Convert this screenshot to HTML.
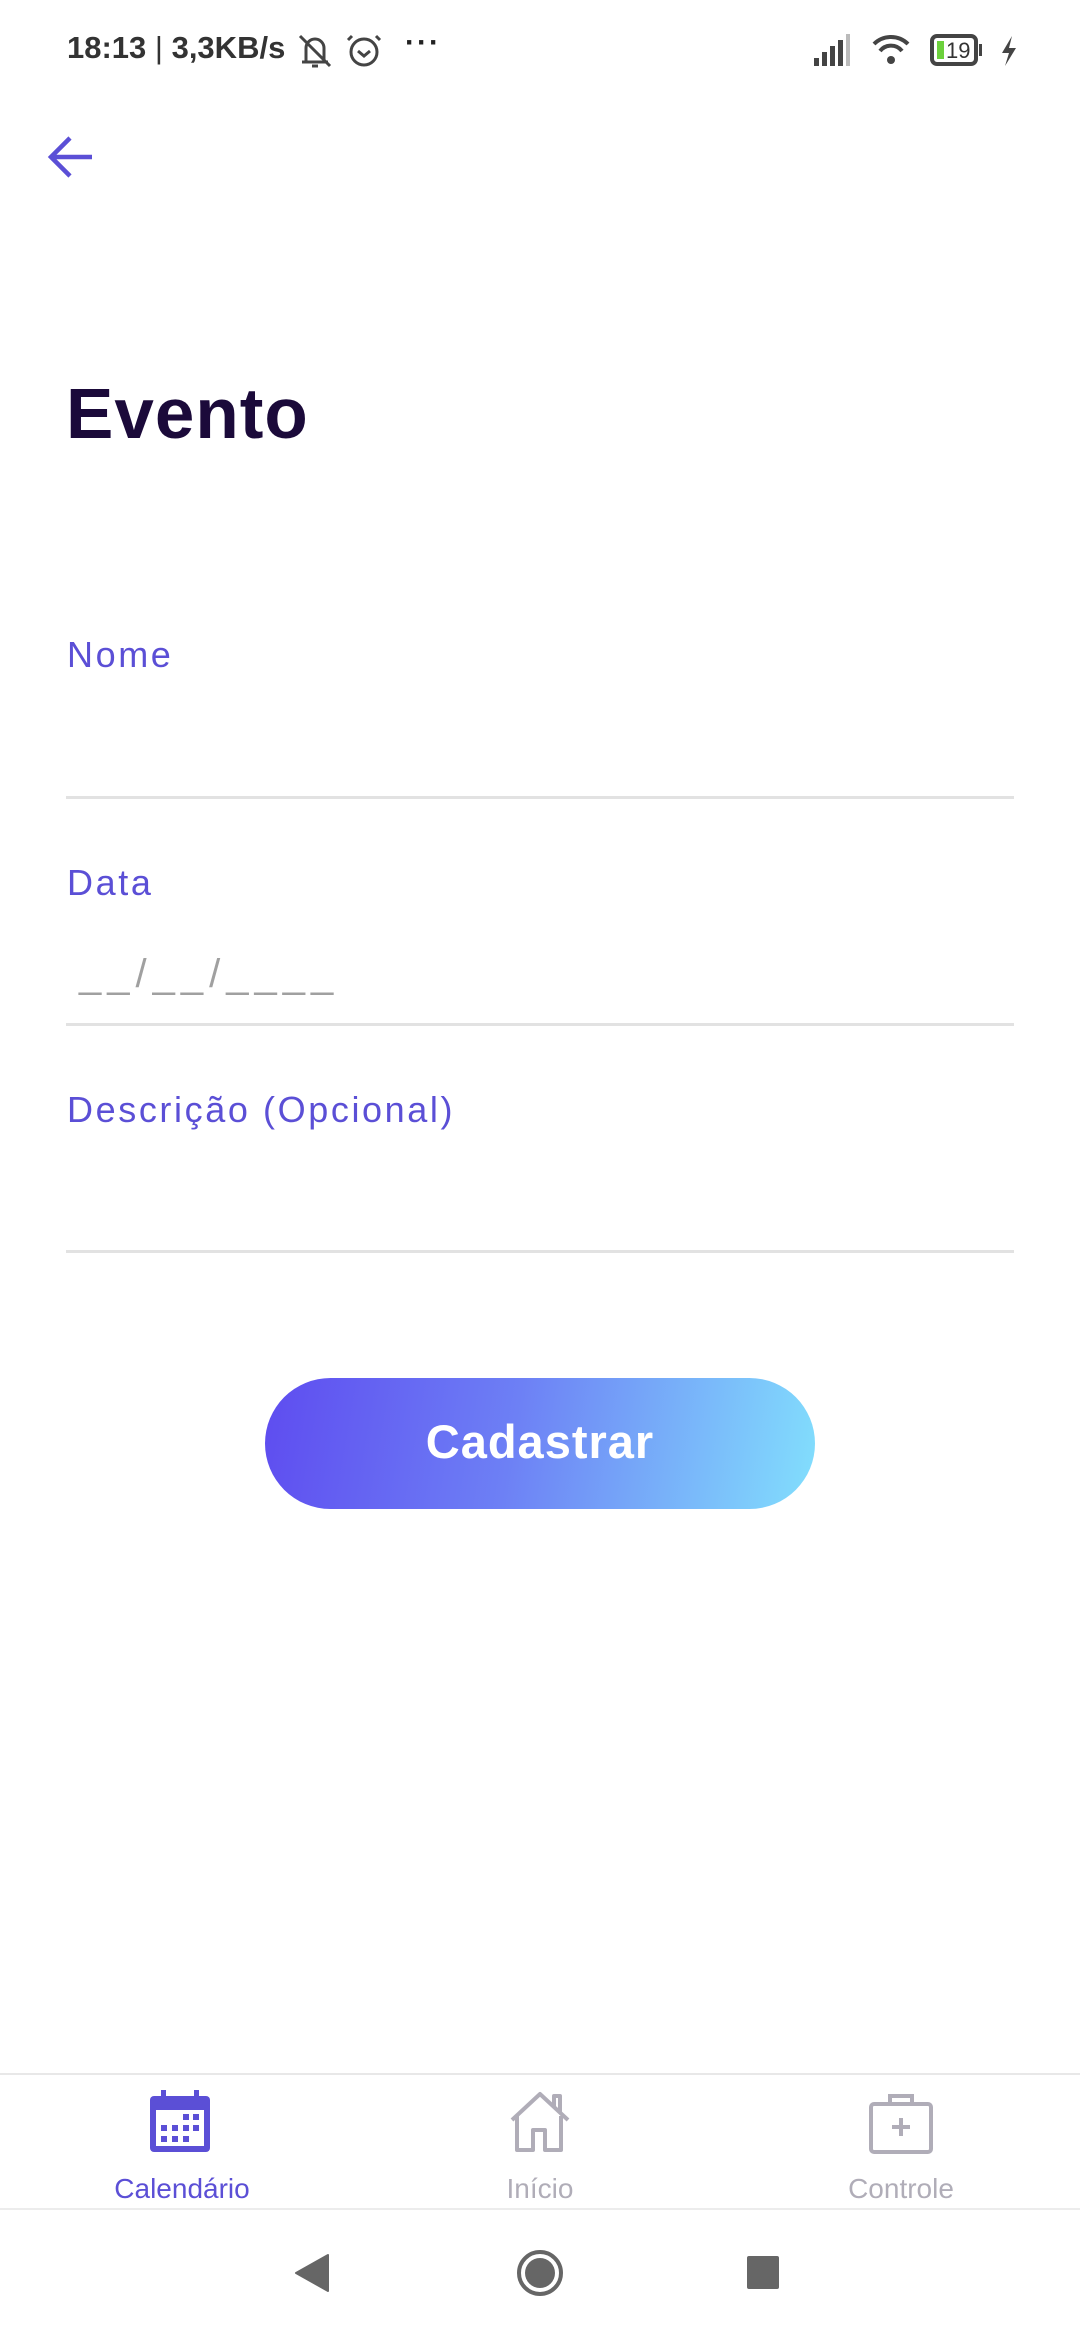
<!DOCTYPE html>
<html><head><meta charset="utf-8"><style>
*{margin:0;padding:0;box-sizing:border-box}
body{width:1080px;height:2340px;background:#fff;position:relative;overflow:hidden;font-family:"Liberation Sans",sans-serif}
.abs{position:absolute}
.lbl{position:absolute;left:67px;color:#5b4fd6;font-size:36px;letter-spacing:2.6px;font-weight:500}
.line{position:absolute;left:66px;width:948px;height:3px;background:#e2e2e2}
.nav{position:absolute;font-size:28px;text-align:center;width:240px}
</style></head><body>
<div class="abs" style="left:67px;top:30px;font-size:31px;font-weight:bold;color:#333">18:13 <span style="font-weight:normal">|</span> 3,3KB/s</div>
<svg class="abs" style="left:296px;top:30px" width="110" height="42" viewBox="0 0 110 42">
<g fill="none" stroke="#444" stroke-width="3"><path d="M6 32h26M10 32V18a9 9 0 0 1 18 0v14M16 36h6M4 6l30 30"/>
<circle cx="68" cy="22" r="13"/><path d="M62 21l6 5 6-5M56 6l-4 4M80 6l4 4"/></g></svg>
<div class="abs" style="left:405px;top:26px;font-size:30px;font-weight:bold;color:#222;letter-spacing:2px">···</div>
<svg class="abs" style="left:812px;top:30px" width="220" height="42" viewBox="0 0 220 42">
<g fill="#444"><rect x="2" y="28" width="5" height="8"/><rect x="10" y="22" width="5" height="14"/><rect x="18" y="16" width="5" height="20"/><rect x="26" y="10" width="5" height="26"/><rect x="34" y="4" width="4" height="32" fill="#bbb"/></g>
<g fill="none" stroke="#444" stroke-width="4"><path d="M62 14a24 24 0 0 1 34 0M68 21a14 14 0 0 1 22 0"/></g><circle cx="79" cy="30" r="4" fill="#444"/>
<rect x="120" y="6" width="44" height="28" rx="5" fill="none" stroke="#444" stroke-width="4"/><rect x="125" y="11" width="7" height="18" fill="#6cd13c"/>
<text x="134" y="28" font-size="22" fill="#333" font-family="Liberation Sans">19</text><rect x="167" y="14" width="3" height="12" fill="#444"/>
<path d="M200 6l-10 17h7l-4 13 11-18h-7z" fill="#444"/></svg>
<svg class="abs" style="left:46px;top:134px" width="50" height="46" viewBox="0 0 50 46"><path d="M46 23H6M24 4L5 23l19 19" fill="none" stroke="#5b4fd6" stroke-width="4.5"/></svg>
<div class="abs" style="left:66px;top:374px;font-size:71px;font-weight:bold;color:#1b0a3a;letter-spacing:1px">Evento</div>
<div class="lbl" style="top:634px">Nome</div>
<div class="line" style="top:796px"></div>
<div class="lbl" style="top:862px">Data</div>
<div class="abs" style="left:79px;top:952px;font-size:40px;color:#a0a0a0;letter-spacing:6px">__/__/____</div>
<div class="line" style="top:1023px"></div>
<div class="lbl" style="top:1089px">Descrição (Opcional)</div>
<div class="line" style="top:1250px"></div>
<div class="abs" style="left:265px;top:1378px;width:550px;height:131px;border-radius:66px;background:linear-gradient(100deg,#5e4cf0 0%,#6d80f5 45%,#82dffd 100%);color:#fff;font-size:47px;font-weight:bold;text-align:center;line-height:127px;letter-spacing:1px">Cadastrar</div>
<div class="abs" style="left:0;top:2073px;width:1080px;height:2px;background:#e8e8e8"></div>
<svg class="abs" style="left:150px;top:2090px" width="60" height="64" viewBox="0 0 60 64"><rect x="0" y="6" width="60" height="56" rx="4" fill="#5b4fd6"/><rect x="11" y="0" width="5" height="10" fill="#5b4fd6"/><rect x="44" y="0" width="5" height="10" fill="#5b4fd6"/><rect x="6" y="20" width="48" height="36" fill="#fff"/>
<g fill="#5b4fd6"><rect x="33" y="24" width="6" height="6"/><rect x="43" y="24" width="6" height="6"/><rect x="11" y="35" width="6" height="6"/><rect x="22" y="35" width="6" height="6"/><rect x="33" y="35" width="6" height="6"/><rect x="43" y="35" width="6" height="6"/><rect x="11" y="46" width="6" height="6"/><rect x="22" y="46" width="6" height="6"/><rect x="33" y="46" width="6" height="6"/></g></svg>
<svg class="abs" style="left:508px;top:2090px" width="64" height="64" viewBox="0 0 64 64"><path d="M4 30L32 4l28 26M9 26v34h16V40h12v20h16V26M46 16V6h6v16" fill="none" stroke="#b0adb8" stroke-width="4" stroke-linejoin="round"/></svg>
<svg class="abs" style="left:868px;top:2092px" width="66" height="62" viewBox="0 0 66 62"><rect x="3" y="12" width="60" height="48" rx="3" fill="none" stroke="#b0adb8" stroke-width="4"/><path d="M22 12V4h22v8M33 26v18M24 35h18" fill="none" stroke="#b0adb8" stroke-width="4"/></svg>
<div class="nav" style="left:62px;top:2173px;color:#5b4fd6">Calendário</div>
<div class="nav" style="left:420px;top:2173px;color:#b0adb8">Início</div>
<div class="nav" style="left:781px;top:2173px;color:#b0adb8">Controle</div>
<div class="abs" style="left:0;top:2208px;width:1080px;height:2px;background:#ececec"></div>
<svg class="abs" style="left:290px;top:2245px" width="500" height="56" viewBox="0 0 500 56"><path d="M38 10v36L6 28z" fill="#666" stroke="#666" stroke-width="2" stroke-linejoin="round"/>
<circle cx="250" cy="28" r="21" fill="none" stroke="#666" stroke-width="4"/><circle cx="250" cy="28" r="15" fill="#666"/><rect x="457" y="11" width="32" height="33" rx="2" fill="#666"/></svg>
</body></html>
